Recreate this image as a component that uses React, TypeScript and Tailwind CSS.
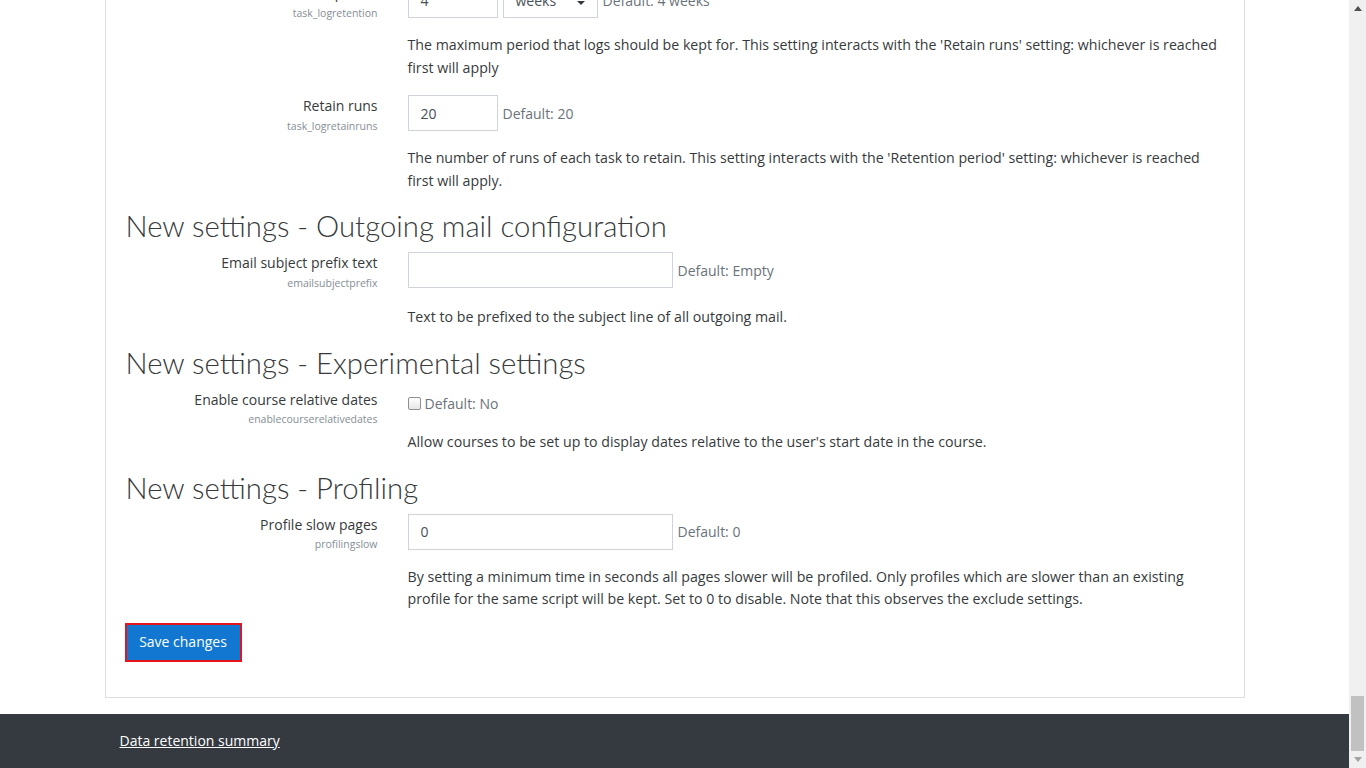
import type { ReactNode } from "react";

const font = { fontFamily: '"Open Sans", "Noto Sans", sans-serif' };

interface SettingProps {
  label: string;
  name: string;
  children: ReactNode;
  desc: ReactNode;
  descGap?: string;
}

function Setting({ label, name, children, desc, descGap = "mt-4" }: SettingProps) {
  return (
    <div className="flex mx-[-15px] mb-4">
      <div className="w-[282px] shrink-0 px-[15px] text-right">
        <div className="leading-[22.5px]">{label}</div>
        <div className="text-[10.5px] leading-[16px] text-[#868e96]">{name}</div>
      </div>
      <div className="w-[846px] shrink-0 px-[15px]">
        {children}
        <div className={descGap + " text-[14.2px] leading-[22.5px]"}>{desc}</div>
      </div>
    </div>
  );
}

function Heading({ children }: { children: ReactNode }) {
  return (
    <h3
      className="mb-2 text-[29.3px] font-light leading-[36px] text-[#373a3c]"
      style={{ fontFamily: 'Lato, "Open Sans", sans-serif' }}
    >
      {children}
    </h3>
  );
}

function TextBox({ value, wide }: { value: string; wide?: boolean }) {
  return (
    <div
      className={
        (wide ? "w-[265px]" : "w-[90px]") +
        " h-[36px] border border-[#ced4da] px-3 flex items-center text-[#495057]"
      }
    >
      {value}
    </div>
  );
}

function Muted({ children }: { children: ReactNode }) {
  return <span className="ml-[5px] text-[#6a737b]">{children}</span>;
}

export default function App() {
  return (
    <div className="flex h-[768px] overflow-hidden bg-white text-[14px] text-[#373a3c]" style={font}>
      <div className="flex-1 flex flex-col overflow-hidden">
        <div className="w-[1140px] mx-auto mt-[-39px] border border-[#dfdfdf] p-5">
          <Setting
            label="Retention period"
            name="task_logretention"
            desc="The maximum period that logs should be kept for. This setting interacts with the 'Retain runs' setting: whichever is reached first will apply"
          >
            <div className="flex items-center">
              <TextBox value="4" />
              <div className="ml-[5px] w-[95px] h-[36px] border border-[#ced4da] pl-3 pr-3 flex items-center justify-between text-[#495057]">
                <span>weeks</span>
                <svg width="8" height="10" viewBox="0 0 4 5">
                  <path d="M2 0L0 2h4zm0 5L0 3h4z" fill="#343a40" />
                </svg>
              </div>
              <Muted>Default: 4 weeks</Muted>
            </div>
          </Setting>

          <Setting
            label="Retain runs"
            name="task_logretainruns"
            desc="The number of runs of each task to retain. This setting interacts with the 'Retention period' setting: whichever is reached first will apply."
          >
            <div className="flex items-center">
              <TextBox value="20" />
              <Muted>Default: 20</Muted>
            </div>
          </Setting>

          <Heading>New settings - Outgoing mail configuration</Heading>
          <Setting
            label="Email subject prefix text"
            name="emailsubjectprefix"
            descGap="mt-[18px]"
            desc="Text to be prefixed to the subject line of all outgoing mail."
          >
            <div className="flex items-center">
              <TextBox value="" wide />
              <Muted>Default: Empty</Muted>
            </div>
          </Setting>

          <Heading>New settings - Experimental settings</Heading>
          <Setting
            label="Enable course relative dates"
            name="enablecourserelativedates"
            desc="Allow courses to be set up to display dates relative to the user's start date in the course."
          >
            <div className="flex items-center pt-[4px] leading-[22.5px]">
              <span className="w-[13px] h-[13px] rounded-[2px] border border-[#8f8f8f] bg-gradient-to-b from-white to-[#e6e6e6]" />
              <span className="ml-[4px] text-[#6a737b]">Default: No</span>
            </div>
          </Setting>

          <Heading>New settings - Profiling</Heading>
          <Setting
            label="Profile slow pages"
            name="profilingslow"
            desc="By setting a minimum time in seconds all pages slower will be profiled. Only profiles which are slower than an existing profile for the same script will be kept. Set to 0 to disable. Note that this observes the exclude settings."
          >
            <div className="flex items-center">
              <TextBox value="0" wide />
              <Muted>Default: 0</Muted>
            </div>
          </Setting>

          <div className="ml-[-1px] mt-[-4px] mb-[15px] w-fit border-2 border-[#e8141c]">
            <button className="h-[35px] w-[113px] bg-[#1177d1] text-white leading-[22.5px]">
              Save changes
            </button>
          </div>
        </div>

        <div className="mt-4 flex-1 bg-[#343a40]">
          <div className="w-[1140px] mx-auto px-[15px] pt-4">
            <a href="#" className="text-white underline leading-[22.5px]">
              Data retention summary
            </a>
          </div>
        </div>
      </div>

      <div className="w-[17px] shrink-0 flex flex-col bg-[#f0f0f0]">
        <div className="h-[17px] flex items-center justify-center">
          <svg width="8" height="5" viewBox="0 0 8 5">
            <path d="M0 5 L4 0 L8 5 Z" fill="#505050" />
          </svg>
        </div>
        <div className="flex-1 flex flex-col justify-end px-[2px]">
          <div className="h-[55px] bg-[#c1c1c1]" />
        </div>
        <div className="h-[17px] flex items-center justify-center">
          <svg width="8" height="5" viewBox="0 0 8 5">
            <path d="M0 0 L8 0 L4 5 Z" fill="#a3a3a3" />
          </svg>
        </div>
      </div>
    </div>
  );
}
